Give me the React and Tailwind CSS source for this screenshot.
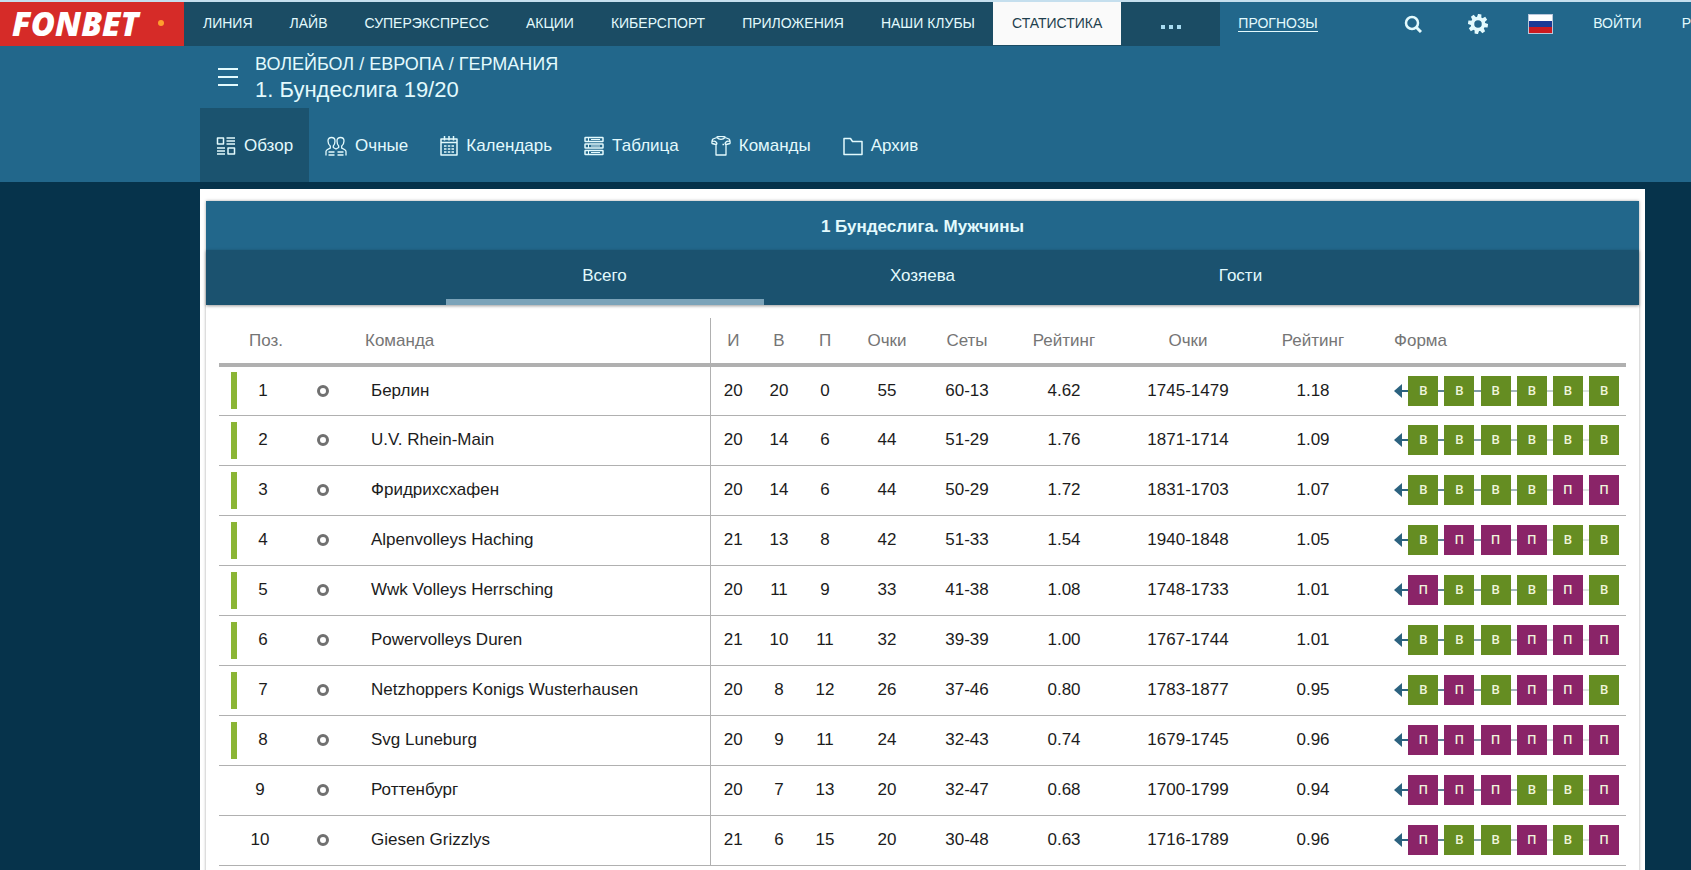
import React, { useState } from 'react';

const NAV = ['ЛИНИЯ', 'ЛАЙВ', 'СУПЕРЭКСПРЕСС', 'АКЦИИ', 'КИБЕРСПОРТ', 'ПРИЛОЖЕНИЯ', 'НАШИ КЛУБЫ'];

const ROWS = [
  ['Берлин', 20, 20, 0, 55, '60-13', '4.62', '1745-1479', '1.18', 'ВВВВВВ'],
  ['U.V. Rhein-Main', 20, 14, 6, 44, '51-29', '1.76', '1871-1714', '1.09', 'ВВВВВВ'],
  ['Фридрихсхафен', 20, 14, 6, 44, '50-29', '1.72', '1831-1703', '1.07', 'ВВВВПП'],
  ['Alpenvolleys Haching', 21, 13, 8, 42, '51-33', '1.54', '1940-1848', '1.05', 'ВПППВВ'],
  ['Wwk Volleys Herrsching', 20, 11, 9, 33, '41-38', '1.08', '1748-1733', '1.01', 'ПВВВПВ'],
  ['Powervolleys Duren', 21, 10, 11, 32, '39-39', '1.00', '1767-1744', '1.01', 'ВВВППП'],
  ['Netzhoppers Konigs Wusterhausen', 20, 8, 12, 26, '37-46', '0.80', '1783-1877', '0.95', 'ВПВППВ'],
  ['Svg Luneburg', 20, 9, 11, 24, '32-43', '0.74', '1679-1745', '0.96', 'ПППППП'],
  ['Роттенбург', 20, 7, 13, 20, '32-47', '0.68', '1700-1799', '0.94', 'ПППВВП'],
  ['Giesen Grizzlys', 21, 6, 15, 20, '30-48', '0.63', '1716-1789', '0.96', 'ПВВПВП'],
];

// connector between form squares fades with age
const LINKS = ['bg-[#2b627f]', 'bg-[#5b7f90]', 'bg-[#7f9aa5]', 'bg-[#a3b5bb]', 'bg-[#c3cfd1]', 'bg-[#dfe6e3]'];

const Svg = ({ w = 20, children }) => (
  <svg width={w} height="20" viewBox={`0 0 ${w} 20`} fill="none" stroke="currentColor" strokeWidth="1.5" strokeLinejoin="round" className="shrink-0" aria-hidden="true">{children}</svg>
);

const SECTIONS = [
  { name: 'Обзор', icon: <Svg><path d="M1.500 2h6v6h-6zM12 12h6.500v6H12zM10.500 2h8.500M10.500 5h8.500M10.500 8h8.500M1 12h8M1 15h8M1 18h8" /></Svg> },
  { name: 'Очные', icon: <Svg w={22}><path d="M1 19.500V15.500c0-1.500 1-2 4.300-3.300V10C3.500 8.500 3 6.500 3 5c0-2.500 1.500-3.500 3.500-3.500S10 2.500 10 5c0 1.500-.3 3.500-1.700 5v1.500L11 13l2.700-1.500V10C12.300 8.500 12 6.500 12 5c0-2.500 1.500-3.500 3.500-3.500S19 2.500 19 5c0 1.500-.5 3.500-2.300 5v2.200C20 13.500 21 14 21 15.500v4M3.500 16h6M3.500 19h6M12.500 16h6M12.500 19h6" strokeWidth="1.3" /></Svg> },
  { name: 'Календарь', icon: <Svg w={18}><path d="M1 3h16v16H1zM1 6.500h16M4.500 0v4.500M9 0v4.500M13.500 0v4.500" /><path d="M4 10h2.500M7.800 10h2.500M11.500 10H14M4 13h2.500M7.800 13h2.500M11.500 13H14M4 16h2.500M7.800 16h2.500M11.500 16H14" strokeWidth="1.3" /></Svg> },
  { name: 'Таблица', icon: <Svg><rect x="1" y="1.500" width="18" height="4" rx=".5" /><rect x="1" y="8" width="18" height="4" rx=".5" /><rect x="1" y="14.500" width="18" height="4" rx=".5" /><path d="M4.500 1.500v4M4.500 8v4M4.500 14.500v4M7 3.500h9M7 10h9M7 16.500h9" strokeWidth="1" /></Svg> },
  { name: 'Команды', icon: <Svg><path d="M6 1.500C8 4 12 4 14 1.500l4 1.500c1 1 1.300 2.500 1 4.500l-4 1V19H5V8.500l-4-1C.7 5.500 1 4 2 3zM1 5.500c1.500-.5 3-.8 4 .5 1.200 1.200 1.200 2 0 3M19 5.500c-1.500-.5-3-.8-4 .5-1.200 1.200-1.200 2 0 3M5.500 1C8 .2 12 .2 14.500 1M11.500 8.500h1.500" strokeWidth="1.3" /></Svg> },
  { name: 'Архив', icon: <Svg><path d="M1 2.500h6.500l2 3H19v13H1z" /></Svg> },
];

const TEETH = [0, 45, 90, 135, 180, 225, 270, 315];

function Form({ results }) {
  return (
    <div className="flex w-[225px] items-center">
      <span className="h-0 w-0 border-y-[7px] border-r-8 border-y-transparent border-r-[#2b627f]" />
      {results.split('').map((r, i) => (
        <React.Fragment key={i}>
          <span className={`h-[2px] flex-1 ${LINKS[i]}`} />
          <span className={`flex h-[30px] w-[30px] items-center justify-center font-['Open_Sans',sans-serif] text-[13px] font-semibold text-[#f0f5dc] ${r === 'В' ? 'bg-[#658d22]' : 'bg-[#8a2468]'}`}>{r}</span>
        </React.Fragment>
      ))}
    </div>
  );
}

export default function App() {
  const [section, setSection] = useState('Обзор');
  const [tab, setTab] = useState('Всего');

  return (
    <div className="h-screen overflow-hidden bg-[#06334b] font-['Liberation_Sans',Arial,sans-serif] text-[17px] text-[#e3fafd]">
      <header className="border-t-2 border-[#c5dfee] bg-[#22678b]">
        <div className="flex h-11 items-stretch text-sm whitespace-nowrap">
          <a href="#home" className="flex w-[184px] shrink-0 items-center justify-between bg-[#d62b28] pr-5 pb-[2px] pl-3 font-['Open_Sans',sans-serif] text-[33px] leading-none font-extrabold text-white italic">
            FONBET<span className="h-[6px] w-[6px] rounded-full bg-[#ff9f2e]" />
          </a>
          <nav className="flex shrink-0 bg-[#1b4c64]">
            {NAV.map(n => <a key={n} href="#nav" className="flex items-center pr-[18px] pb-[2px] pl-[19px]">{n}</a>)}
            <a href="#stats" className="mb-px flex items-center bg-[#fafafa] px-[19px] pb-px text-[#1f3f4e]">СТАТИСТИКА</a>
            <button aria-label="Ещё" className="flex w-[99px] items-center justify-center gap-1 pt-[6px]">
              <span className="h-1 w-1 bg-[#a9dcf2]" /><span className="h-1 w-1 bg-[#a9dcf2]" /><span className="h-1 w-1 bg-[#a9dcf2]" />
            </button>
          </nav>
          <a href="#tips" className="mb-px ml-[18px] self-center border-b border-[#e3fafd] leading-4">ПРОГНОЗЫ</a>
          <div className="ml-auto flex shrink-0 items-center gap-10">
            <button aria-label="Поиск" className="w-6">
              <svg width="18" height="18" viewBox="0 0 18 18" fill="none" stroke="currentColor" strokeWidth="2.500"><circle cx="8" cy="8" r="6" /><path d="M12 12l5 5" strokeWidth="3" /></svg>
            </button>
            <button aria-label="Настройки">
              <svg width="20" height="20" viewBox="0 0 20 20" fill="currentColor">
                <circle cx="10" cy="10" r="5.500" fill="none" stroke="currentColor" strokeWidth="3.500" />
                {TEETH.map(a => <path key={a} d="M8.300 0h3.400l.6 4H7.700z" transform={`rotate(${a + 10} 10 10)`} />)}
              </svg>
            </button>
            <button aria-label="Русский" className="flex h-5 w-[25px] flex-col border border-[#b9c6da]">
              <span className="w-full flex-1 bg-white" /><span className="w-full flex-1 bg-[#1c3a94]" /><span className="w-full flex-1 bg-[#cc1a1f]" />
            </button>
            <a href="#login" className="pb-[2px]">ВОЙТИ</a>
            <a href="#register" className="pb-[2px]">Р</a>
          </div>
        </div>

        <div className="pl-[200px]">
          <div className="flex h-[62px] items-center gap-[17px] pl-[18px]">
            <button aria-label="Меню" className="flex w-5 flex-col gap-[6px]">
              <span className="h-[2px] bg-current" /><span className="h-[2px] bg-current" /><span className="h-[2px] bg-current" />
            </button>
            <div className="pt-[2px]">
              <p className="text-lg leading-6">ВОЛЕЙБОЛ / ЕВРОПА / ГЕРМАНИЯ</p>
              <h1 className="text-[22px] leading-7">1. Бундеслига 19/20</h1>
            </div>
          </div>
          <div className="flex h-[74px]">
            {SECTIONS.map(s => (
              <button key={s.name} onClick={() => setSection(s.name)} className={`flex items-center gap-2 px-4 pt-[2px] ${section === s.name ? 'bg-[#1b536f]' : ''}`}>{s.icon}{s.name}</button>
            ))}
          </div>
        </div>
      </header>

      <main className="mt-[7px] mr-[46px] ml-[200px] bg-white px-[6px] pt-3 text-[#1c1c1c]">
        <div className="shadow-[0_0_3px_rgba(0,0,0,0.35)]">
          <h2 className="h-[49px] bg-[#22678b] text-center leading-[51px] font-bold text-[#e3fafd]">1 Бундеслига. Мужчины</h2>
          <div className="flex justify-center bg-[#1b526f] text-[#e3fafd] shadow-[0_1px_3px_rgba(0,0,0,0.4)]">
            {['Всего', 'Хозяева', 'Гости'].map(t => (
              <button key={t} onClick={() => setTab(t)} className={`h-[55px] w-[318px] border-b-[6px] pt-[2px] ${tab === t ? 'border-[#7ba3b9]' : 'border-transparent'}`}>{t}</button>
            ))}
          </div>
          <div className="px-[13px] pt-[13px]">
            <table className="w-full table-fixed border-collapse text-center">
              <thead className="text-[#757575]">
                <tr className="h-[47px] border-b-4 border-[#b0b0b0]">
                  <th className="w-[82px] pl-3 font-normal">Поз.</th>
                  <th className="w-[43px]" />
                  <th className="w-auto border-r border-[#b0b0b0] pl-[21px] text-left font-normal">Команда</th>
                  <th className="w-[46px] font-normal">И</th>
                  <th className="w-[46px] font-normal">В</th>
                  <th className="w-[46px] font-normal">П</th>
                  <th className="w-[78px] font-normal">Очки</th>
                  <th className="w-[82px] font-normal">Сеты</th>
                  <th className="w-[112px] font-normal">Рейтинг</th>
                  <th className="w-[136px] font-normal">Очки</th>
                  <th className="w-[114px] font-normal">Рейтинг</th>
                  <th className="w-[256px] pl-6 text-left font-normal">Форма</th>
                </tr>
              </thead>
              <tbody>
                {ROWS.map(([team, ...cells], i) => (
                  <tr key={team} className="h-[50px] border-b border-[#b0b0b0]">
                    <td className="px-3">
                      <div className="flex h-[37px] items-center">
                        {i < 8 && <span className="h-full w-[6px] bg-[#8bb535]" />}
                        <span className="flex-1">{i + 1}</span>
                      </div>
                    </td>
                    <td><span className="mx-auto block h-3 w-3 rounded-full border-[3px] border-[#707070]" /></td>
                    <td className="border-r border-[#b0b0b0] pl-[27px] text-left">{team}</td>
                    {cells.slice(0, 8).map((c, j) => <td key={j}>{c}</td>)}
                    <td className="pl-6"><Form results={cells[8]} /></td>
                  </tr>
                ))}
              </tbody>
            </table>
            <div className="h-5" />
          </div>
        </div>
      </main>
    </div>
  );
}
